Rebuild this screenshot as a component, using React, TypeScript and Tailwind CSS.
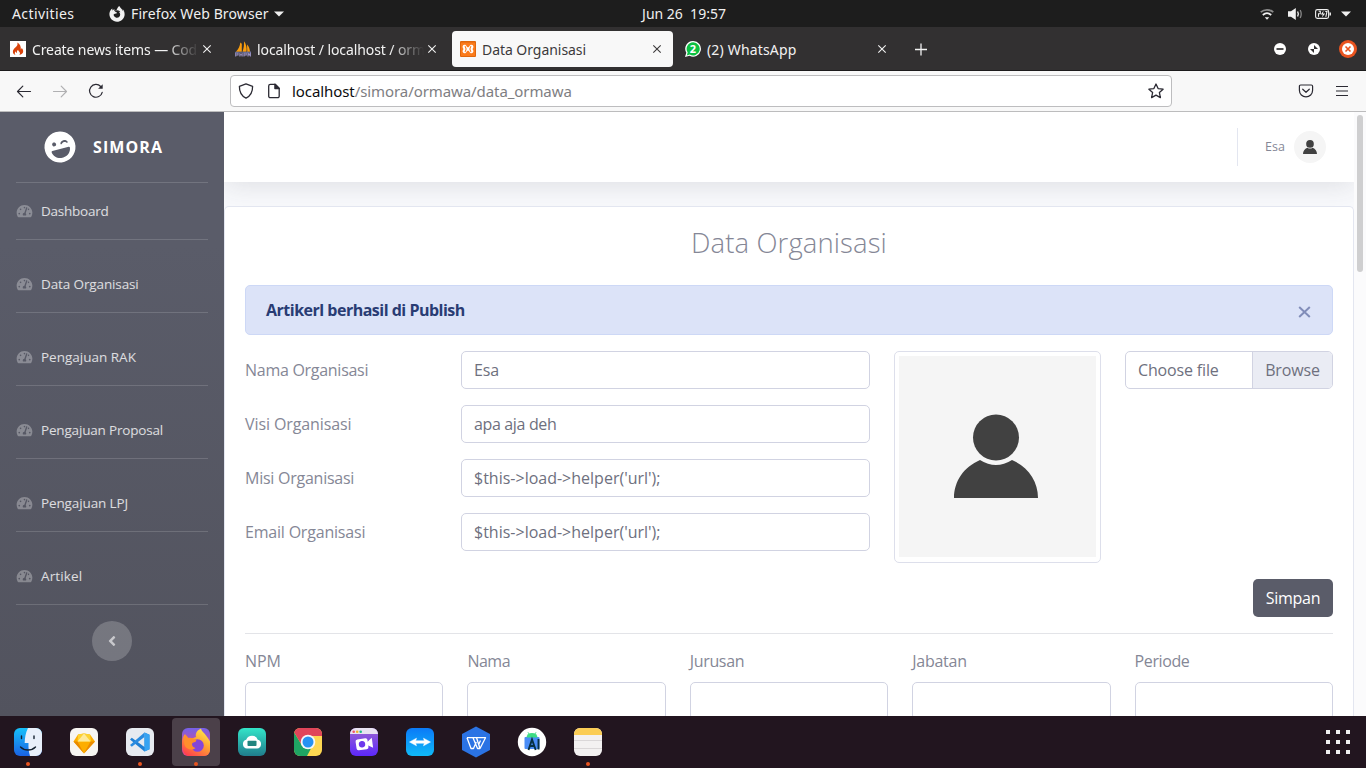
import type { ReactNode } from "react";
import { FaTachometerAlt, FaLaughWink, FaAngleLeft, FaFirefoxBrowser } from "react-icons/fa";

const UI = "font-['Noto_Sans',sans-serif]";

function CloseX() {
  return (
    <svg className="h-4 w-4 shrink-0" viewBox="0 0 16 16" fill="none" stroke="currentColor" strokeWidth="1.1">
      <path d="M4.3 4.3l7.4 7.4M11.7 4.3l-7.4 7.4" />
    </svg>
  );
}

function SystemBar() {
  return (
    <div className="grid h-[27px] shrink-0 grid-cols-[1fr_auto_1fr] items-center bg-[#1d1d1d] text-[14px] text-[#f0f0f0]">
      <div className="flex items-center pl-3">
        <span className="w-[97px] tracking-[0.4px] whitespace-nowrap">Activities</span>
        <FaFirefoxBrowser className="h-4 w-4 text-[#f0f0f0]" />
        <span className="ml-[6px] w-[139px] tracking-[0.12px] whitespace-nowrap">Firefox Web Browser</span>
        <svg className="ml-1 h-[6px] w-[10px]" viewBox="0 0 10 6" fill="currentColor"><path d="M0 .5h10L5 5.5z" /></svg>
      </div>
      <div className="pl-[2px] whitespace-pre">Jun 26  19:57</div>
      <div className="flex items-center justify-end pr-[15px]">
        <svg className="h-[14px] w-[14px]" viewBox="0 0 14 14" fill="none" stroke="currentColor" strokeWidth="1.7">
          <path d="M.7 5.2C4.3 2 9.7 2 13.3 5.2" stroke="#8a8a8a" />
          <path d="M2.8 8C5.3 5.7 8.7 5.7 11.2 8" />
          <path d="M4.800 10.200h4.400L7 12.700z" fill="currentColor" stroke="none" />
        </svg>
        <svg className="ml-[14px] h-[14px] w-[14px]" viewBox="0 0 14 14" fill="currentColor">
          <path d="M0 4.300h3L7.800 1v12L3 9.700H0z" />
          <path d="M9.600 4.500q1.500 2.500 0 5" fill="none" stroke="currentColor" strokeWidth="1.400" />
          <path d="M12.200 3q2 4 0 8" fill="none" stroke="#888" strokeWidth="1.300" />
        </svg>
        <svg className="ml-[13px] h-[10px] w-[16px]" viewBox="0 0 16 10" fill="none" stroke="currentColor" strokeWidth="1.100">
          <rect x=".6" y=".6" width="13" height="8.800" rx="1.800" />
          <path d="M15.200 3.500v3" strokeWidth="1.500" />
          <path d="M3.700 2.200h1.600v2.600H3.500v3M10.300 2.500h1.700l-1.200 5.300" />
          <path d="M8.600 1.500L5.800 5.500h2L6.900 8.600l3.300-4.200H8z" fill="currentColor" stroke="none" />
        </svg>
        <svg className="ml-[10px] h-[6px] w-[10px]" viewBox="0 0 10 6" fill="currentColor"><path d="M0 .5h10L5 5.5z" /></svg>
      </div>
    </div>
  );
}

function Flame() {
  return (
    <svg className="h-4 w-4 shrink-0" viewBox="0 0 16 16">
      <rect width="16" height="16" fill="#fff" />
      <path d="M7.300 1.500c.7 2.200-.2 3.300-1.700 4.800C4 7.800 2.800 9 2.900 10.900c.1 1.500 1.100 2.600 2.600 3.100-1-1.200-.9-2.600.2-3.800.1 1 .5 1.500 1.200 1.700-.2-1.500.2-2.300 1.200-3.200 0 1.600 1.900 2 1.900 3.600 0 .7-.3 1.300-.8 1.800 2.200-.5 4-1.800 4-3.900 0-1.500-.8-2.600-1.700-3.300.1.8-.2 1.300-.7 1.500C11.100 5.300 9.900 2.700 7.300 1.500z" fill="#d9420b" />
    </svg>
  );
}

function Sails() {
  return (
    <svg className="h-4 w-4 shrink-0" viewBox="0 0 16 16">
      <path d="M5.300 1.500C5 5 3.500 8.500.8 10.800H6.800V2.800z" fill="#f89c0e" />
      <path d="M9 .3c2.300 3 3 6.500 2.500 10.500H7.500C8.800 7 9.200 4 9 .3zM12 3.500c2 2 2.800 4.500 3 7.300h-2.700z" fill="#f89c0e" />
      <path d="M.7 15.500v-3.500h2.300v2H1M4.900 12v3.500m0-1.800h2.200m0-1.700v3.500M9 15.500V12h2.200v2H9M13 15.500V12l1.200 2 1.200-2v3.500" fill="none" stroke="#9b93c4" strokeWidth="1.100" />
      <path d="M0 11.300h16" stroke="#6c78af" strokeWidth=".8" />
    </svg>
  );
}

function Xampp() {
  return (
    <svg className="h-4 w-4 shrink-0" viewBox="0 0 16 16">
      <rect width="16" height="16" rx="1" fill="#e0670c" />
      <rect x="1" y="1.500" width="14" height="13.500" rx=".5" fill="#fb7b1b" />
      <path d="M4.600 3.800c-1.700 0-2 1.300-2 2.100s.5 1.500 1 2.100c-.5.600-1 1.300-1 2.100s.3 2.100 2 2.100c2.200 0 1.600-2.500 3.400-2.500s1.200 2.500 3.400 2.500c1.700 0 2-1.300 2-2.100s-.5-1.500-1-2.100c.5-.6 1-1.300 1-2.100s-.3-2.100-2-2.100C9.200 3.800 9.800 6.300 8 6.300S6.800 3.800 4.600 3.800z" fill="#fff" />
      <path d="M4.800 5.300c.9.300.9 1.500 1.300 2.700-.4 1.200-.4 2.400-1.300 2.700M11.200 5.300c-.9.300-.9 1.500-1.300 2.700.4 1.200.4 2.400 1.300 2.700" fill="none" stroke="#fb7b1b" strokeWidth="1.100" />
    </svg>
  );
}

function WhatsApp() {
  return (
    <div className="relative flex h-4 w-4 shrink-0 items-center justify-center">
      <svg className="absolute inset-0" viewBox="0 0 16 16">
        <path d="M8.200 0a7.800 7.800 0 1 1-3.700 14.700L0 16l1.300-4.300A7.800 7.800 0 0 1 8.200 0z" fill="#fff" />
        <path d="M8.200 1.300a6.600 6.600 0 1 1-3.400 12.300l-3 .8.900-2.900A6.600 6.600 0 0 1 8.200 1.300z" fill="#0cc042" />
      </svg>
      <span className="relative text-[11px] leading-none font-bold text-white">2</span>
    </div>
  );
}

function Tab({ icon, title, active = false, fade = false, spacing }: { icon: ReactNode; title: string; active?: boolean; fade?: boolean; spacing: string }) {
  return (
    <div className={"flex h-9 w-[221px] items-center rounded-[4px] px-2 text-[14px] " + (active ? "bg-[#f8f8f8] text-[#3c3a3b]" : "text-[#f2f2f2]")}>
      {icon}
      <span className={"mt-px ml-[6px] min-w-0 flex-1 whitespace-nowrap " + spacing + (fade ? " [mask-image:linear-gradient(90deg,#000_80%,transparent)]" : "")}>{title}</span>
      <CloseX />
    </div>
  );
}

function TabStrip() {
  return (
    <div className="flex h-[44px] shrink-0 items-center border-b border-[#1c1b1c] bg-[#323031] pl-[2px]">
      <div className="flex gap-1">
        <Tab icon={<Flame />} title="Create news items — Cod" fade spacing="tracking-[-0.12px]" />
        <Tab icon={<Sails />} title="localhost / localhost / orm" fade spacing="tracking-[-0.1px]" />
        <Tab icon={<Xampp />} title="Data Organisasi" active spacing="tracking-[-0.05px]" />
        <Tab icon={<WhatsApp />} title="(2) WhatsApp" spacing="tracking-[0.17px]" />
      </div>
      <svg className="ml-[15px] h-4 w-4 text-[#f2f2f2]" viewBox="0 0 16 16" stroke="currentColor" strokeWidth="1.300"><path d="M2 8.500h12M8 2.500v12" /></svg>
      <div className="ml-auto flex items-center pr-[9px]">
        <svg className="h-[12px] w-[12px]" viewBox="0 0 12 12"><circle cx="6" cy="6" r="6" fill="#fff" /><path d="M2.500 6h7" stroke="#323031" strokeWidth="1.700" /></svg>
        <svg className="ml-[22px] h-[12px] w-[12px]" viewBox="0 0 12 12"><circle cx="6" cy="6" r="6" fill="#fff" /><path d="M6 2v4H2zM6 10V6h4z" fill="#323031" transform="matrix(-1 0 0 1 12 0)" /></svg>
        <svg className="ml-[19px] h-[18px] w-[18px]" viewBox="0 0 18 18"><circle cx="9" cy="9" r="9" fill="#e95420" /><circle cx="9" cy="9" r="6" fill="#fff" /><path d="M6.500 6.500l5 5M11.500 6.500l-5 5" stroke="#e95420" strokeWidth="1.600" /></svg>
      </div>
    </div>
  );
}

function AddressBar() {
  return (
    <div className="flex h-[41px] shrink-0 items-center border-b border-[#bcbcbd] bg-[#f8f8f8] text-[#2b2a33]">
      <svg className="ml-4 h-4 w-4" viewBox="0 0 16 16" fill="none" stroke="currentColor" strokeWidth="1.200" strokeLinecap="round" strokeLinejoin="round"><path d="M14.500 8.500H1.500M6.800 3.200L1.500 8.500l5.300 5.300" /></svg>
      <svg className="ml-5 h-4 w-4 text-[#b0b0b2]" viewBox="0 0 16 16" fill="none" stroke="currentColor" strokeWidth="1.200" strokeLinecap="round" strokeLinejoin="round"><path d="M1.500 8.500h13M9.200 3.200l5.300 5.300-5.300 5.300" /></svg>
      <svg className="ml-5 h-4 w-4" viewBox="0 0 16 16" fill="none" stroke="currentColor" strokeWidth="1.200" strokeLinecap="round"><path d="M14.200 9.300A6.400 6.400 0 1 1 12.700 3.500" /><path d="M14.700 1.200v4.600h-4.600z" fill="currentColor" stroke="none" /></svg>
      <div className="ml-[126px] flex h-8 w-[942px] items-center rounded-[4px] border border-[#bdbdbf] bg-white">
        <svg className="ml-[7px] h-4 w-4" viewBox="0 0 16 16" fill="none" stroke="currentColor" strokeWidth="1.300" strokeLinejoin="round"><path d="M8 .9L14.600 3.300C14.700 8 13.400 12.600 8 15.200 2.600 12.600 1.300 8 1.400 3.300z" /></svg>
        <svg className="ml-[12px] h-4 w-4" viewBox="0 0 16 16" fill="none" stroke="currentColor" strokeWidth="1.300" strokeLinejoin="round"><path d="M2.700 3a1.700 1.700 0 0 1 1.700-1.700h4.800l4 4v7.900a1.500 1.500 0 0 1-1.500 1.500H4.200a1.500 1.500 0 0 1-1.500-1.500z" /><path d="M8.900 1.300v4.300h4.300z" fill="currentColor" /></svg>
        <span className="ml-[10px] text-[15px] tracking-[-0.08px] whitespace-nowrap text-[#7e7e82]"><span className="text-[#0c0c0d]">localhost</span>/simora/ormawa/data_ormawa</span>
        <svg className="mr-[7px] ml-auto h-4 w-4" viewBox="0 0 16 16" fill="none" stroke="currentColor" strokeWidth="1.300" strokeLinejoin="round"><path d="M8 1l2.100 4.600 5 .6-3.700 3.400 1 5L8 12.100l-4.400 2.500 1-5L.9 6.200l5-.6z" /></svg>
      </div>
      <svg className="ml-[126px] h-4 w-4" viewBox="0 0 16 16" fill="none" stroke="currentColor" strokeWidth="1.200" strokeLinecap="round" strokeLinejoin="round"><path d="M2.700 2h10.600c.8 0 1.300.5 1.300 1.300v4a6.600 6.600 0 0 1-13.200 0v-4C1.400 2.500 1.900 2 2.700 2zM4.700 6.200L8 9.300l3.300-3.100" /></svg>
      <svg className="ml-5 h-4 w-4" viewBox="0 0 16 16" stroke="currentColor" strokeWidth="1.200"><path d="M2 3.500h12M2 8h12M2 12.500h12" /></svg>
    </div>
  );
}

const NAV: [string, string][] = [
  ["Dashboard", "tracking-[-0.25px]"],
  ["Data Organisasi", "tracking-[-0.12px]"],
  ["Pengajuan RAK", "tracking-[0px]"],
  ["Pengajuan Proposal", "tracking-[-0.18px]"],
  ["Pengajuan LPJ", "tracking-[-0.12px]"],
  ["Artikel", "tracking-[0.12px]"],
];

function Sidebar() {
  return (
    <div className="flex w-[224px] shrink-0 flex-col bg-linear-to-b from-[#5a5c69] from-22% to-[#52535e] px-4 font-['Open_Sans',sans-serif]">
      <div className="flex h-[70px] items-center pl-[28px] text-white">
        <FaLaughWink className="h-8 w-8 -rotate-15" />
        <span className="ml-[17px] text-[16px] font-bold tracking-[1.1px] whitespace-nowrap">SIMORA</span>
      </div>
      <div className="h-px shrink-0 bg-white/15" />
      {NAV.map(([name, spacing], i) => (
        <div key={name} className={i ? "mt-4" : ""}>
          <div className="flex h-14 items-center">
            <FaTachometerAlt className="h-[14px] w-[17px] text-white/30" />
            <span className={"ml-2 text-[13.500px] whitespace-nowrap text-white/80 " + spacing}>{name}</span>
          </div>
          <div className="h-px bg-white/15" />
        </div>
      ))}
      <div className="mx-auto mt-4 flex h-10 w-10 items-center justify-center rounded-full bg-white/20 text-white/60">
        <FaAngleLeft className="h-4 w-4" />
      </div>
    </div>
  );
}

function Person({ className }: { className: string }) {
  return (
    <svg className={className} viewBox="0 0 84 84" fill="#414141">
      <circle cx="42" cy="23.500" r="23" />
      <path d="M26 46Q42 56 58 46C74 53 84 67 84 84H0C0 67 10 53 26 46z" />
    </svg>
  );
}

const FIELDS: [string, string, string, string][] = [
  ["Nama Organisasi", "tracking-[-0.28px]", "Esa", "tracking-[-0.1px]"],
  ["Visi Organisasi", "tracking-[-0.1px]", "apa aja deh", "tracking-[-0.35px]"],
  ["Misi Organisasi", "tracking-[-0.25px]", "$this->load->helper('url');", "tracking-[0px]"],
  ["Email Organisasi", "tracking-[-0.2px]", "$this->load->helper('url');", "tracking-[0px]"],
];

const COLUMNS: [string, string][] = [
  ["NPM", "tracking-[-0.1px]"],
  ["Nama", "tracking-[-0.5px]"],
  ["Jurusan", "tracking-[-0.35px]"],
  ["Jabatan", "tracking-[-0.25px]"],
  ["Periode", "tracking-[-0.4px]"],
];

function Content() {
  return (
    <div className="flex min-w-0 flex-1 flex-col overflow-hidden bg-[#f8f9fc] font-['Open_Sans',sans-serif] text-[#858796]">
      <div className="flex h-[70px] shrink-0 items-center justify-end bg-white pr-7 shadow-[0_2px_28px_rgba(58,59,69,0.15)]">
        <div className="h-[38px] w-px bg-[#e3e6f0]" />
        <span className="ml-[27px] w-[21px] text-[12.500px]">Esa</span>
        <div className="ml-[8px] flex h-8 w-8 items-center justify-center rounded-full bg-[#f5f5f5]">
          <Person className="h-[14px] w-[14px]" />
        </div>
      </div>
      <div className="mt-6 flex flex-1 flex-col rounded-t-[5px] border border-b-0 border-[#e3e6f0] bg-white px-5 pt-[19px]">
        <h1 className="text-center text-[27.500px] leading-[34px] font-[350] tracking-[0.1px]">Data Organisasi</h1>
        <div className="mt-[25px] flex h-[50px] shrink-0 items-center justify-between rounded-[5px] border border-[#cdd8f6] bg-[#dce3f8] px-5 text-[#293c74]">
          <span className="text-[16px] font-bold tracking-[-0.5px]">Artikerl berhasil di Publish</span>
          <svg className="mt-[3px] mr-[1px] h-[12px] w-[13px]" viewBox="0 0 13 12" stroke="#818db9" strokeWidth="2"><path d="M1.200 1l10.600 10M11.800 1L1.200 11" /></svg>
        </div>
        <div className="mt-4 flex h-[212px] shrink-0">
          <div className="flex w-[625px] flex-col gap-4">
            {FIELDS.map(([label, labelSpacing, value, valueSpacing]) => (
              <div key={label} className="flex h-[38px] items-center">
                <span className={"w-[216px] pb-px text-[16px] whitespace-nowrap " + labelSpacing}>{label}</span>
                <div className={"flex h-full flex-1 items-center rounded-[5px] border border-[#d1d3e2] px-3 pb-px text-[16px] whitespace-nowrap text-[#6e707e] " + valueSpacing}>{value}</div>
              </div>
            ))}
          </div>
          <div className="ml-6 w-[207px] rounded-[5px] border border-[#dddfeb] bg-white px-1 pt-1 pb-[5px]">
            <div className="flex h-full items-center justify-center bg-[#f5f5f5] pb-[2px]">
              <Person className="mr-[3px] h-[84px] w-[84px]" />
            </div>
          </div>
          <div className="ml-6 flex h-[38px] w-[208px] items-stretch overflow-hidden rounded-[5px] border border-[#d1d3e2] text-[16px] text-[#6e707e]">
            <div className="flex flex-1 items-center pb-px pl-3 tracking-[-0.15px] whitespace-nowrap">Choose file</div>
            <div className="flex w-20 items-center justify-center border-l border-[#d1d3e2] bg-[#eaecf4] pb-px tracking-[-0.15px]">Browse</div>
          </div>
        </div>
        <div className="mt-4 flex h-[38px] w-20 shrink-0 items-center justify-center self-end rounded-[5px] bg-[#5a5c69] pb-px text-[16px] tracking-[-0.3px] text-white">Simpan</div>
        <div className="mt-4 h-px shrink-0 bg-[#e3e4e8]" />
        <div className="mt-[15px] grid grid-cols-5 gap-x-6 text-[16px]">
          {COLUMNS.map(([name, spacing]) => (
            <div key={name}>
              <div className={"h-[33px] leading-6 " + spacing}>{name}</div>
              <div className="h-[38px] rounded-[5px] border border-[#d1d3e2]" />
            </div>
          ))}
        </div>
      </div>
    </div>
  );
}

const DOCK: { name: string; running?: boolean; focused?: boolean; art: ReactNode }[] = [
  {
    name: "files",
    running: true,
    art: (
      <>
        <rect width="28" height="28" rx="6" fill="url(#gFinder)" />
        <path d="M14 0C11.500 5 10.800 10 10.700 15H14.500C14.300 20 14.800 24 16 28h6a6 6 0 0 0 6-6V6a6 6 0 0 0-6-6z" fill="#e8effa" />
        <path d="M7.500 8v2.500M20 8v2.500M6.500 19c4 4 11 4 15 0" fill="none" stroke="#13202e" strokeWidth="1.400" strokeLinecap="round" />
      </>
    ),
  },
  {
    name: "sketch",
    art: (
      <>
        <rect width="28" height="28" rx="6" fill="#f7f5f2" />
        <path d="M8 6.500L14 5.500l6 1L25 13.500 14 25.500 3.500 13.500z" fill="#fdad00" />
        <path d="M8 6.500L14 5.500l6 1 1 7H7.500z" fill="#fdd231" />
        <path d="M14 5.500l6.500 8h-13z" fill="#fee99a" />
        <path d="M3.500 13.500h4L14 25.500zM25 13.500h-4.500L14 25.500z" fill="#ea8a00" />
      </>
    ),
  },
  {
    name: "code",
    running: true,
    art: (
      <>
        <rect width="28" height="28" rx="6" fill="#e7eaf0" />
        <path d="M18.500 4.500L23.500 6.800V21.200L18.500 23.500L4 11.500L5.800 9.800L18.500 19z" fill="#1f7fd4" />
        <path d="M18.500 4.500L4 17l1.800 1.700L18.500 9z" fill="#2a8be0" />
        <path d="M18.500 4.500l5 2.300v14.400l-5 2.300z" fill="#37a3f2" />
      </>
    ),
  },
  {
    name: "firefox",
    running: true,
    focused: true,
    art: (
      <>
        <clipPath id="cFox"><rect width="28" height="28" rx="6" /></clipPath>
        <g clipPath="url(#cFox)">
          <rect width="28" height="28" fill="url(#gFoxBg)" />
          <path d="M19 .5c.5 3 3 4 5 7 1.500 2 3 4 4 6V28H6C2 26 0 22 0 16c0-4 .5-7 3-10l2 4c3 0 5 1 9-1-1-4 1.500-7 5-8.500z" fill="url(#gFox)" />
          <circle cx="15.500" cy="17.500" r="6.300" fill="#8546d9" />
          <path d="M3.500 6.500L6.500 10c2.500-.5 5 .2 7.500 2 1 1.200-1 2.500-3.200 2.700-1.500 1-.8 4.300 2.700 5.300C10 23 4 21.500 2.500 17 1.500 13.500 2.300 10 3.500 6.500z" fill="#ff8f2c" />
        </g>
      </>
    ),
  },
  {
    name: "cloud",
    art: (
      <>
        <rect width="28" height="28" rx="6" fill="url(#gCloud)" />
        <path d="M9 20.500a4.500 4.500 0 0 1-.8-8.800 6.200 6.200 0 0 1 11.600 0 4.500 4.500 0 0 1-.8 8.800z" fill="#fff" />
        <rect x="9.500" y="12.700" width="9" height="5.300" rx=".8" fill="#21857f" />
      </>
    ),
  },
  {
    name: "chrome",
    art: (
      <>
        <clipPath id="cChrome"><rect width="28" height="28" rx="6" /></clipPath>
        <g clipPath="url(#cChrome)">
          <rect width="28" height="28" fill="#fed752" />
          <path d="M0 4L8 17.500l9 3L13 28H0z" fill="#1fa463" />
          <path d="M0 0h28v8H14L8 17.500 0 4z" fill="#e0455a" />
        </g>
        <circle cx="14" cy="14" r="7.300" fill="#f7f7f7" />
        <circle cx="14" cy="14" r="5.500" fill="#2692f2" />
      </>
    ),
  },
  {
    name: "screencast",
    art: (
      <>
        <rect width="28" height="28" rx="6" fill="url(#gPurple)" />
        <path d="M0 6a6 6 0 0 1 6-6h16a6 6 0 0 1 6 6z" fill="#e8e2f1" />
        <circle cx="3.700" cy="3.800" r="1.300" fill="#f05168" /><circle cx="7.200" cy="3.800" r="1.300" fill="#f1b52c" /><circle cx="10.700" cy="3.800" r="1.300" fill="#1bba8a" />
        <g transform="rotate(-8 14 16)">
          <rect x="6" y="10.500" width="12" height="11" rx="2" fill="#fff" />
          <path d="M17 15l5.500-4v10L17 17.500z" fill="#fff" />
          <circle cx="12" cy="16" r="3.200" fill="#6e38ed" />
        </g>
      </>
    ),
  },
  {
    name: "remote",
    art: (
      <>
        <rect width="28" height="28" rx="6" fill="url(#gRemote)" />
        <path d="M3.500 14l7-3.800-.8 2.600h8.600l-.8-2.600 7 3.800-7 3.800.8-2.600H9.700l.8 2.600z" fill="#fff" stroke="#fff" strokeWidth=".5" />
      </>
    ),
  },
  {
    name: "office",
    art: (
      <>
        <path d="M14-1.500L28 6v16L14 29.500 0 22V6z" fill="#2b73e4" />
        <path d="M5 9.700h9.500L18 20.500h-2.500L11 9.700M5 9.700l4 10.800h2.500L14.300 14M14.500 9.700h9L18 20.500M14.500 9.700l1.300 3.500M18.500 12.500l-2 4.500" fill="none" stroke="#fff" strokeWidth="1.300" strokeLinejoin="round" />
      </>
    ),
  },
  {
    name: "android",
    art: (
      <>
        <circle cx="14" cy="14" r="14.200" fill="#fff" />
        <rect x="6.500" y="9" width="15" height="12" rx="1" fill="#4a8df6" />
        <path d="M8.500 9.500a5.500 4.500 0 0 1 11 0z" fill="#3ddc84" /><path d="M10 4.300l1.300 2M18 4.300l-1.300 2" stroke="#3ddc84" />
        <path d="M10.500 22L14 11.500l3.700 10.500M12 18h4.500M20.500 11v10.500" fill="none" stroke="#073042" strokeWidth="1.900" />
      </>
    ),
  },
  {
    name: "notes",
    running: true,
    art: (
      <>
        <rect width="28" height="28" rx="6" fill="#f3f1f1" />
        <path d="M0 7V6a6 6 0 0 1 6-6h16a6 6 0 0 1 6 6v1z" fill="#fbcd55" />
        <path d="M0 12.500h28M0 20.500h28" stroke="#d7d4d5" strokeWidth=".9" />
      </>
    ),
  },
];

function Dock() {
  return (
    <div className="flex h-[52px] shrink-0 items-center justify-between bg-[#22151f] pr-4 pl-1">
      <svg className="absolute h-0 w-0">
        <defs>
          <linearGradient id="gFinder" x1="0" y1="0" x2="0" y2="1"><stop stopColor="#16c0fa" /><stop offset="1" stopColor="#1a62e4" /></linearGradient>
          <linearGradient id="gFoxBg" x1="0" y1="0" x2="0" y2="1"><stop stopColor="#7561e8" /><stop offset="1" stopColor="#f6437a" /></linearGradient>
          <linearGradient id="gFox" x1=".8" y1="0" x2=".2" y2="1"><stop stopColor="#ffed4b" /><stop offset=".5" stopColor="#ff9a34" /><stop offset="1" stopColor="#ff3d4e" /></linearGradient>
          <linearGradient id="gCloud" x1="0" y1="0" x2="0" y2="1"><stop stopColor="#33e5c9" /><stop offset="1" stopColor="#207c8c" /></linearGradient>
          <linearGradient id="gPurple" x1="0" y1="0" x2="0" y2="1"><stop offset=".2" stopColor="#8f59d8" /><stop offset="1" stopColor="#5c27fb" /></linearGradient>
          <linearGradient id="gRemote" x1="0" y1="0" x2="0" y2="1"><stop stopColor="#0b7af8" /><stop offset="1" stopColor="#10baf8" /></linearGradient>
        </defs>
      </svg>
      <div className="flex gap-2">
        {DOCK.map((d) => (
          <div key={d.name} className={"relative flex h-12 w-12 items-center justify-center rounded-[4px] " + (d.focused ? "bg-[#4b4049]" : "")}>
            <svg className="h-7 w-7 overflow-visible" viewBox="0 0 28 28">{d.art}</svg>
            {d.running && <span className="absolute bottom-0 left-[22px] h-1 w-1 rounded-full bg-[#e95420]" />}
          </div>
        ))}
      </div>
      <div className="grid grid-cols-3 gap-[6px]">
        {Array.from({ length: 9 }, (_, i) => <span key={i} className="h-1 w-1 bg-[#f2f2f2]" />)}
      </div>
    </div>
  );
}

export default function App() {
  return (
    <div className={"flex h-[768px] w-[1366px] flex-col overflow-hidden bg-white " + UI}>
      <SystemBar />
      <TabStrip />
      <AddressBar />
      <div className="flex h-[604px] shrink-0 overflow-hidden">
        <Sidebar />
        <Content />
        <div className="flex w-3 shrink-0 justify-center bg-[#fbfbfc] pt-[3px]">
          <div className="h-[157px] w-[6px] rounded-full bg-[#cfcfd0]" />
        </div>
      </div>
      <Dock />
    </div>
  );
}
